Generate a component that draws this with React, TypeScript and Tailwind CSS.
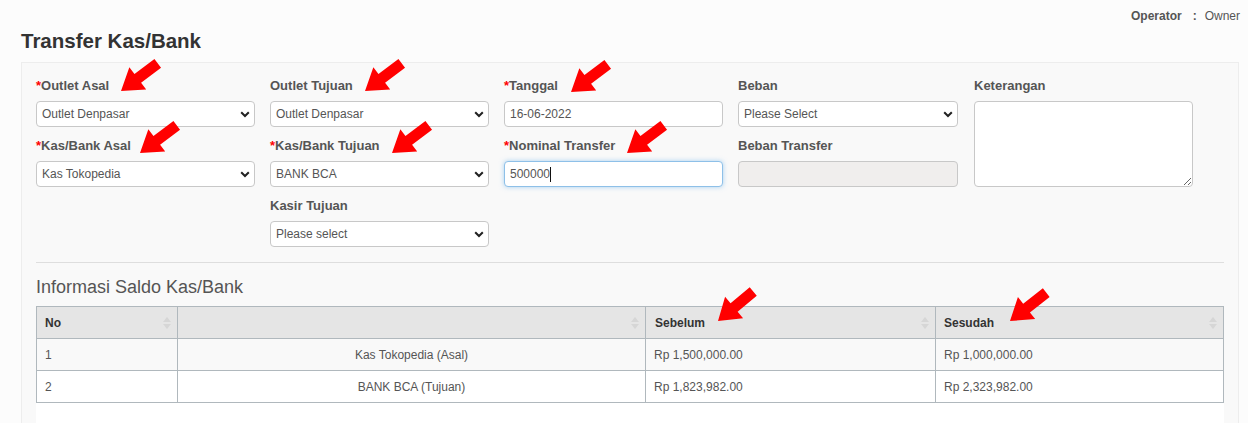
import React from "react";

const inputCore =
  "h-[26px] w-full rounded-[4px] border border-[#c8c8c8] pl-[5px] text-[12px] text-[#555] outline-none";
const inputBase = `${inputCore} bg-white`;

function Label({ text, req }: { text: string; req?: boolean }) {
  return (
    <label className="mb-[6px] block h-[18px] text-[13px] leading-[18px] font-bold text-[#555]">
      {req && <span className="text-[#ff0000]">*</span>}
      {text}
    </label>
  );
}

function Chevron() {
  return (
    <svg
      className="pointer-events-none absolute right-[5px] top-[10px]"
      width="10"
      height="7"
      viewBox="0 0 10 7"
    >
      <path d="M1.2 1.2 L5 5 L8.8 1.2" fill="none" stroke="#222" strokeWidth="2" />
    </svg>
  );
}

function Select({ value }: { value: string }) {
  return (
    <div className="relative w-full">
      <select className={`${inputBase} appearance-none`} defaultValue={value}>
        <option>{value}</option>
      </select>
      <Chevron />
    </div>
  );
}

function Field({ label, req, children }: { label: string; req?: boolean; children: React.ReactNode }) {
  return (
    <div className="flex flex-col">
      <Label text={label} req={req} />
      {children}
    </div>
  );
}

function Sort() {
  return (
    <svg width="8" height="12" viewBox="0 0 8 12" className="shrink-0">
      <polygon points="4,0 8,5 0,5" fill="#d6d6d6" />
      <polygon points="0,7 8,7 4,12" fill="#d6d6d6" />
    </svg>
  );
}

function Arrow({ x, y, a = 143 }: { x: number; y: number; a?: number }) {
  return (
    <g transform={`translate(${x} ${y}) rotate(${a})`}>
      <polygon
        points="0,0 -21,-14 -21,-5.5 -46,-5.5 -46,5.5 -21,5.5 -21,14"
        fill="#ff0000"
      />
    </g>
  );
}

export default function App() {
  const th = "border border-[#b0b8bd] p-0 text-left font-bold text-[#333]";
  const td = "border border-[#b0b8bd] px-[8px] text-[#555]";
  return (
    <div className="relative min-h-[423px] w-[1248px] overflow-hidden bg-[#fcfcfc] font-['Liberation_Sans',Arial,sans-serif]">
      {/* top bar */}
      <div className="flex h-[25px] justify-end pt-[8px] pr-[8px] text-[12px] leading-[17px] text-[#555]">
        <span className="font-bold">Operator</span>
        <span className="ml-[11px] mr-[8px] font-bold">:</span>
        <span>Owner</span>
      </div>
      <h1 className="ml-[21px] mt-[5px] mb-[10px] text-[20.5px] leading-[22px] font-bold text-[#333]">
        Transfer Kas/Bank
      </h1>

      <div className="ml-[21px] w-[1218px] border border-[#ededed] bg-[#f9f9f9] px-[14px] pt-[14px]">
        <div className="grid grid-cols-[234px_234px_234px_236px_219px]">
          <div className="flex w-[219px] flex-col gap-[10px]">
            <Field label="Outlet Asal" req>
              <Select value="Outlet Denpasar" />
            </Field>
            <Field label="Kas/Bank Asal" req>
              <Select value="Kas Tokopedia" />
            </Field>
          </div>
          <div className="flex w-[219px] flex-col gap-[10px]">
            <Field label="Outlet Tujuan">
              <Select value="Outlet Denpasar" />
            </Field>
            <Field label="Kas/Bank Tujuan" req>
              <Select value="BANK BCA" />
            </Field>
            <Field label="Kasir Tujuan">
              <Select value="Please select" />
            </Field>
          </div>
          <div className="flex w-[219px] flex-col gap-[10px]">
            <Field label="Tanggal" req>
              <input className={inputBase} defaultValue="16-06-2022" />
            </Field>
            <Field label="Nominal Transfer" req>
              <div className="flex h-[26px] w-full items-center rounded-[4px] border border-[#8ec0e8] bg-white pl-[5px] text-[12px] text-[#555] shadow-[0_0_5px_rgba(102,175,233,0.55)]">
                <span>500000</span>
                <span className="inline-block h-[15px] w-px bg-[#111]" />
              </div>
            </Field>
          </div>
          <div className="flex w-[220px] flex-col gap-[10px]">
            <Field label="Beban">
              <Select value="Please Select" />
            </Field>
            <Field label="Beban Transfer">
              <div className={`${inputCore} bg-[#f0eeed]`} />
            </Field>
          </div>
          <div className="flex w-[219px] flex-col">
            <Field label="Keterangan">
              <textarea className="h-[86px] w-full rounded-[4px] border border-[#c8c8c8] bg-white p-[5px] text-[12px] text-[#555] outline-none" />
            </Field>
          </div>
        </div>

        <div className="mt-[15px] h-px bg-[#dedede]" />

        <h2 className="mt-[14px] mb-[9px] text-[18px] leading-[20px] text-[#555]">
          Informasi Saldo Kas/Bank
        </h2>

        <table className="w-full table-fixed border-collapse text-[12px]">
          <thead>
            <tr className="h-[32px] bg-[#e5e5e5]">
              <th className={`${th} w-[141px]`}>
                <div className="flex items-center justify-between pl-[8px] pr-[6px]">
                  No
                  <Sort />
                </div>
              </th>
              <th className={`${th} w-[468px]`}>
                <div className="flex items-center justify-end pr-[6px]">
                  <Sort />
                </div>
              </th>
              <th className={`${th} w-[290px]`}>
                <div className="flex items-center justify-between pl-[9px] pr-[6px]">
                  Sebelum
                  <Sort />
                </div>
              </th>
              <th className={th}>
                <div className="flex items-center justify-between pl-[8px] pr-[6px]">
                  Sesudah
                  <Sort />
                </div>
              </th>
            </tr>
          </thead>
          <tbody>
            <tr className="h-[32px] bg-[#f9f9f9]">
              <td className={td}>1</td>
              <td className={`${td} text-center`}>Kas Tokopedia (Asal)</td>
              <td className={td}>Rp 1,500,000.00</td>
              <td className={td}>Rp 1,000,000.00</td>
            </tr>
            <tr className="h-[32px] bg-white">
              <td className={td}>2</td>
              <td className={`${td} text-center`}>BANK BCA (Tujuan)</td>
              <td className={td}>Rp 1,823,982.00</td>
              <td className={td}>Rp 2,323,982.00</td>
            </tr>
          </tbody>
        </table>
        <div className="h-[40px] bg-white" />
      </div>

      <svg
        className="pointer-events-none absolute left-0 top-0"
        width="1248"
        height="423"
        viewBox="0 0 1248 423"
      >
        <Arrow x={121} y={91} />
        <Arrow x={365} y={91} />
        <Arrow x={571} y={92} />
        <Arrow x={140} y={153} />
        <Arrow x={392} y={153} />
        <Arrow x={627} y={153} />
        <Arrow x={718} y={321} a={140} />
        <Arrow x={1010} y={321} a={142} />
      </svg>
    </div>
  );
}
